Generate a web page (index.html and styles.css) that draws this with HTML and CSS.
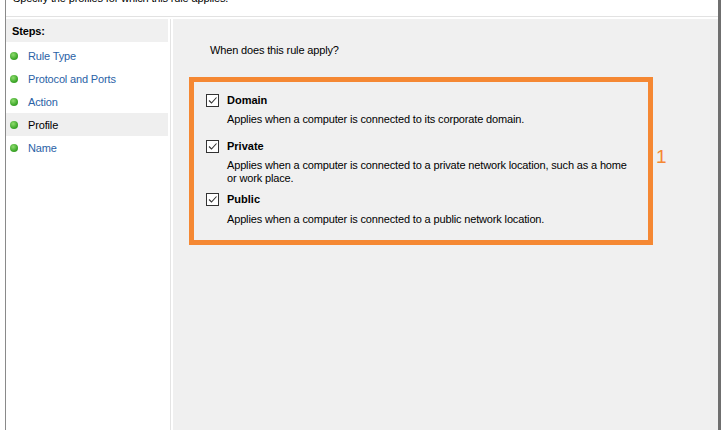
FILE: index.html
```html
<!DOCTYPE html>
<html lang="en">
<head>
    <meta charset="UTF-8">
    <title>New Inbound Rule Wizard - Profile</title>
    <link rel="stylesheet" href="styles.css">
</head>
<body>
    <div class="frame">
        <div class="header">
            <div class="header-text">Specify the profiles for which this rule applies.</div>
        </div>
        <div class="main">
            <div class="steps">
                <div class="steps-title">Steps:</div>
                <div class="step"><span class="dot"></span><span class="step-link">Rule Type</span></div>
                <div class="step"><span class="dot"></span><span class="step-link">Protocol and Ports</span></div>
                <div class="step"><span class="dot"></span><span class="step-link">Action</span></div>
                <div class="step current"><span class="dot"></span><span class="step-link">Profile</span></div>
                <div class="step"><span class="dot"></span><span class="step-link">Name</span></div>
            </div>
            <div class="content">
                <div class="question">When does this rule apply?</div>
                <div class="annotated">
                    <div class="highlight">
                        <div class="option">
                            <div class="option-row">
                                <span class="checkbox"><svg width="11" height="11" viewBox="0 0 11 11"><path d="M2 5.5 L4.5 8 L9.5 2.5" fill="none" stroke="#333" stroke-width="1.1"/></svg></span>
                                <span class="option-label">Domain</span>
                            </div>
                            <div class="option-desc">Applies when a computer is connected to its corporate domain.</div>
                        </div>
                        <div class="option">
                            <div class="option-row">
                                <span class="checkbox"><svg width="11" height="11" viewBox="0 0 11 11"><path d="M2 5.5 L4.5 8 L9.5 2.5" fill="none" stroke="#333" stroke-width="1.1"/></svg></span>
                                <span class="option-label">Private</span>
                            </div>
                            <div class="option-desc">Applies when a computer is connected to a private network location, such as a home or work place.</div>
                        </div>
                        <div class="option last">
                            <div class="option-row">
                                <span class="checkbox"><svg width="11" height="11" viewBox="0 0 11 11"><path d="M2 5.5 L4.5 8 L9.5 2.5" fill="none" stroke="#333" stroke-width="1.1"/></svg></span>
                                <span class="option-label">Public</span>
                            </div>
                            <div class="option-desc">Applies when a computer is connected to a public network location.</div>
                        </div>
                    </div>
                    <div class="marker">1</div>
                </div>
            </div>
        </div>
    </div>
</body>
</html>
```
FILE: styles.css
```css
body {
    margin: 0;
    background: #fff;
    font-family: "Liberation Sans", Arial, sans-serif;
    font-size: 11px;
    letter-spacing: -0.15px;
    color: #000;
    overflow: hidden;
}
.frame {
    margin-left: 5px;
    height: 430px;
    border-left: 1px solid #8a8a8a;
    border-right: 3px solid #6f6f6f;
    display: flex;
    flex-direction: column;
}
.header {
    height: 16px;
    border-bottom: 1px solid #e2e2e2;
    margin-bottom: 2px;
    overflow: hidden;
}
.header-text {
    margin-top: -10px;
    padding-left: 7px;
    line-height: 16px;
}
.main {
    flex: 1;
    display: flex;
}
.steps {
    width: 164px;
    border-right: 1px solid #e4e4e4;
    margin-right: 2px;
    background: #fff;
}
.steps-title {
    height: 23px;
    line-height: 25px;
    background: #f0f0f0;
    font-weight: bold;
    padding-left: 6px;
    margin-bottom: 2px;
    margin-right: 2px;
}
.step {
    height: 23px;
    display: flex;
    align-items: center;
    margin-right: 2px;
}
.step.current {
    background: #efefef;
}
.dot {
    width: 8px;
    height: 8px;
    border-radius: 50%;
    background: radial-gradient(circle at 40% 35%, #8fdc6e, #3fa82b 60%, #2c8a1e);
    margin-left: 4px;
    margin-right: 10px;
}
.step-link {
    color: #2a62a6;
}
.step.current .step-link {
    color: #000;
}
.content {
    flex: 1;
    background: #f0f0f0;
    padding-left: 16px;
}
.question {
    margin-top: 24px;
    padding-left: 21px;
    line-height: 14px;
    height: 34px;
}
.annotated {
    display: flex;
    align-items: center;
}
.highlight {
    border: 5px solid #f58833;
    padding-left: 12px;
    padding-top: 10px;
    width: 442px;
    height: 148px;
}
.option-row {
    display: flex;
    align-items: center;
    height: 16px;
}
.checkbox {
    width: 11px;
    height: 11px;
    border: 1px solid #333;
    background: #fff;
    display: inline-flex;
    margin-right: 8px;
}
.option-label {
    font-weight: bold;
    letter-spacing: 0;
}
.option-desc {
    margin-top: 5px;
    margin-left: 21px;
    line-height: 13px;
    height: 25px;
    width: 406px;
}
.option.last {
    margin-top: 7px;
}
.option.last .option-desc {
    margin-top: 6px;
}
.marker {
    color: #f58833;
    font-size: 19px;
    letter-spacing: 0;
    margin-left: 3px;
    margin-bottom: 8px;
}
```
